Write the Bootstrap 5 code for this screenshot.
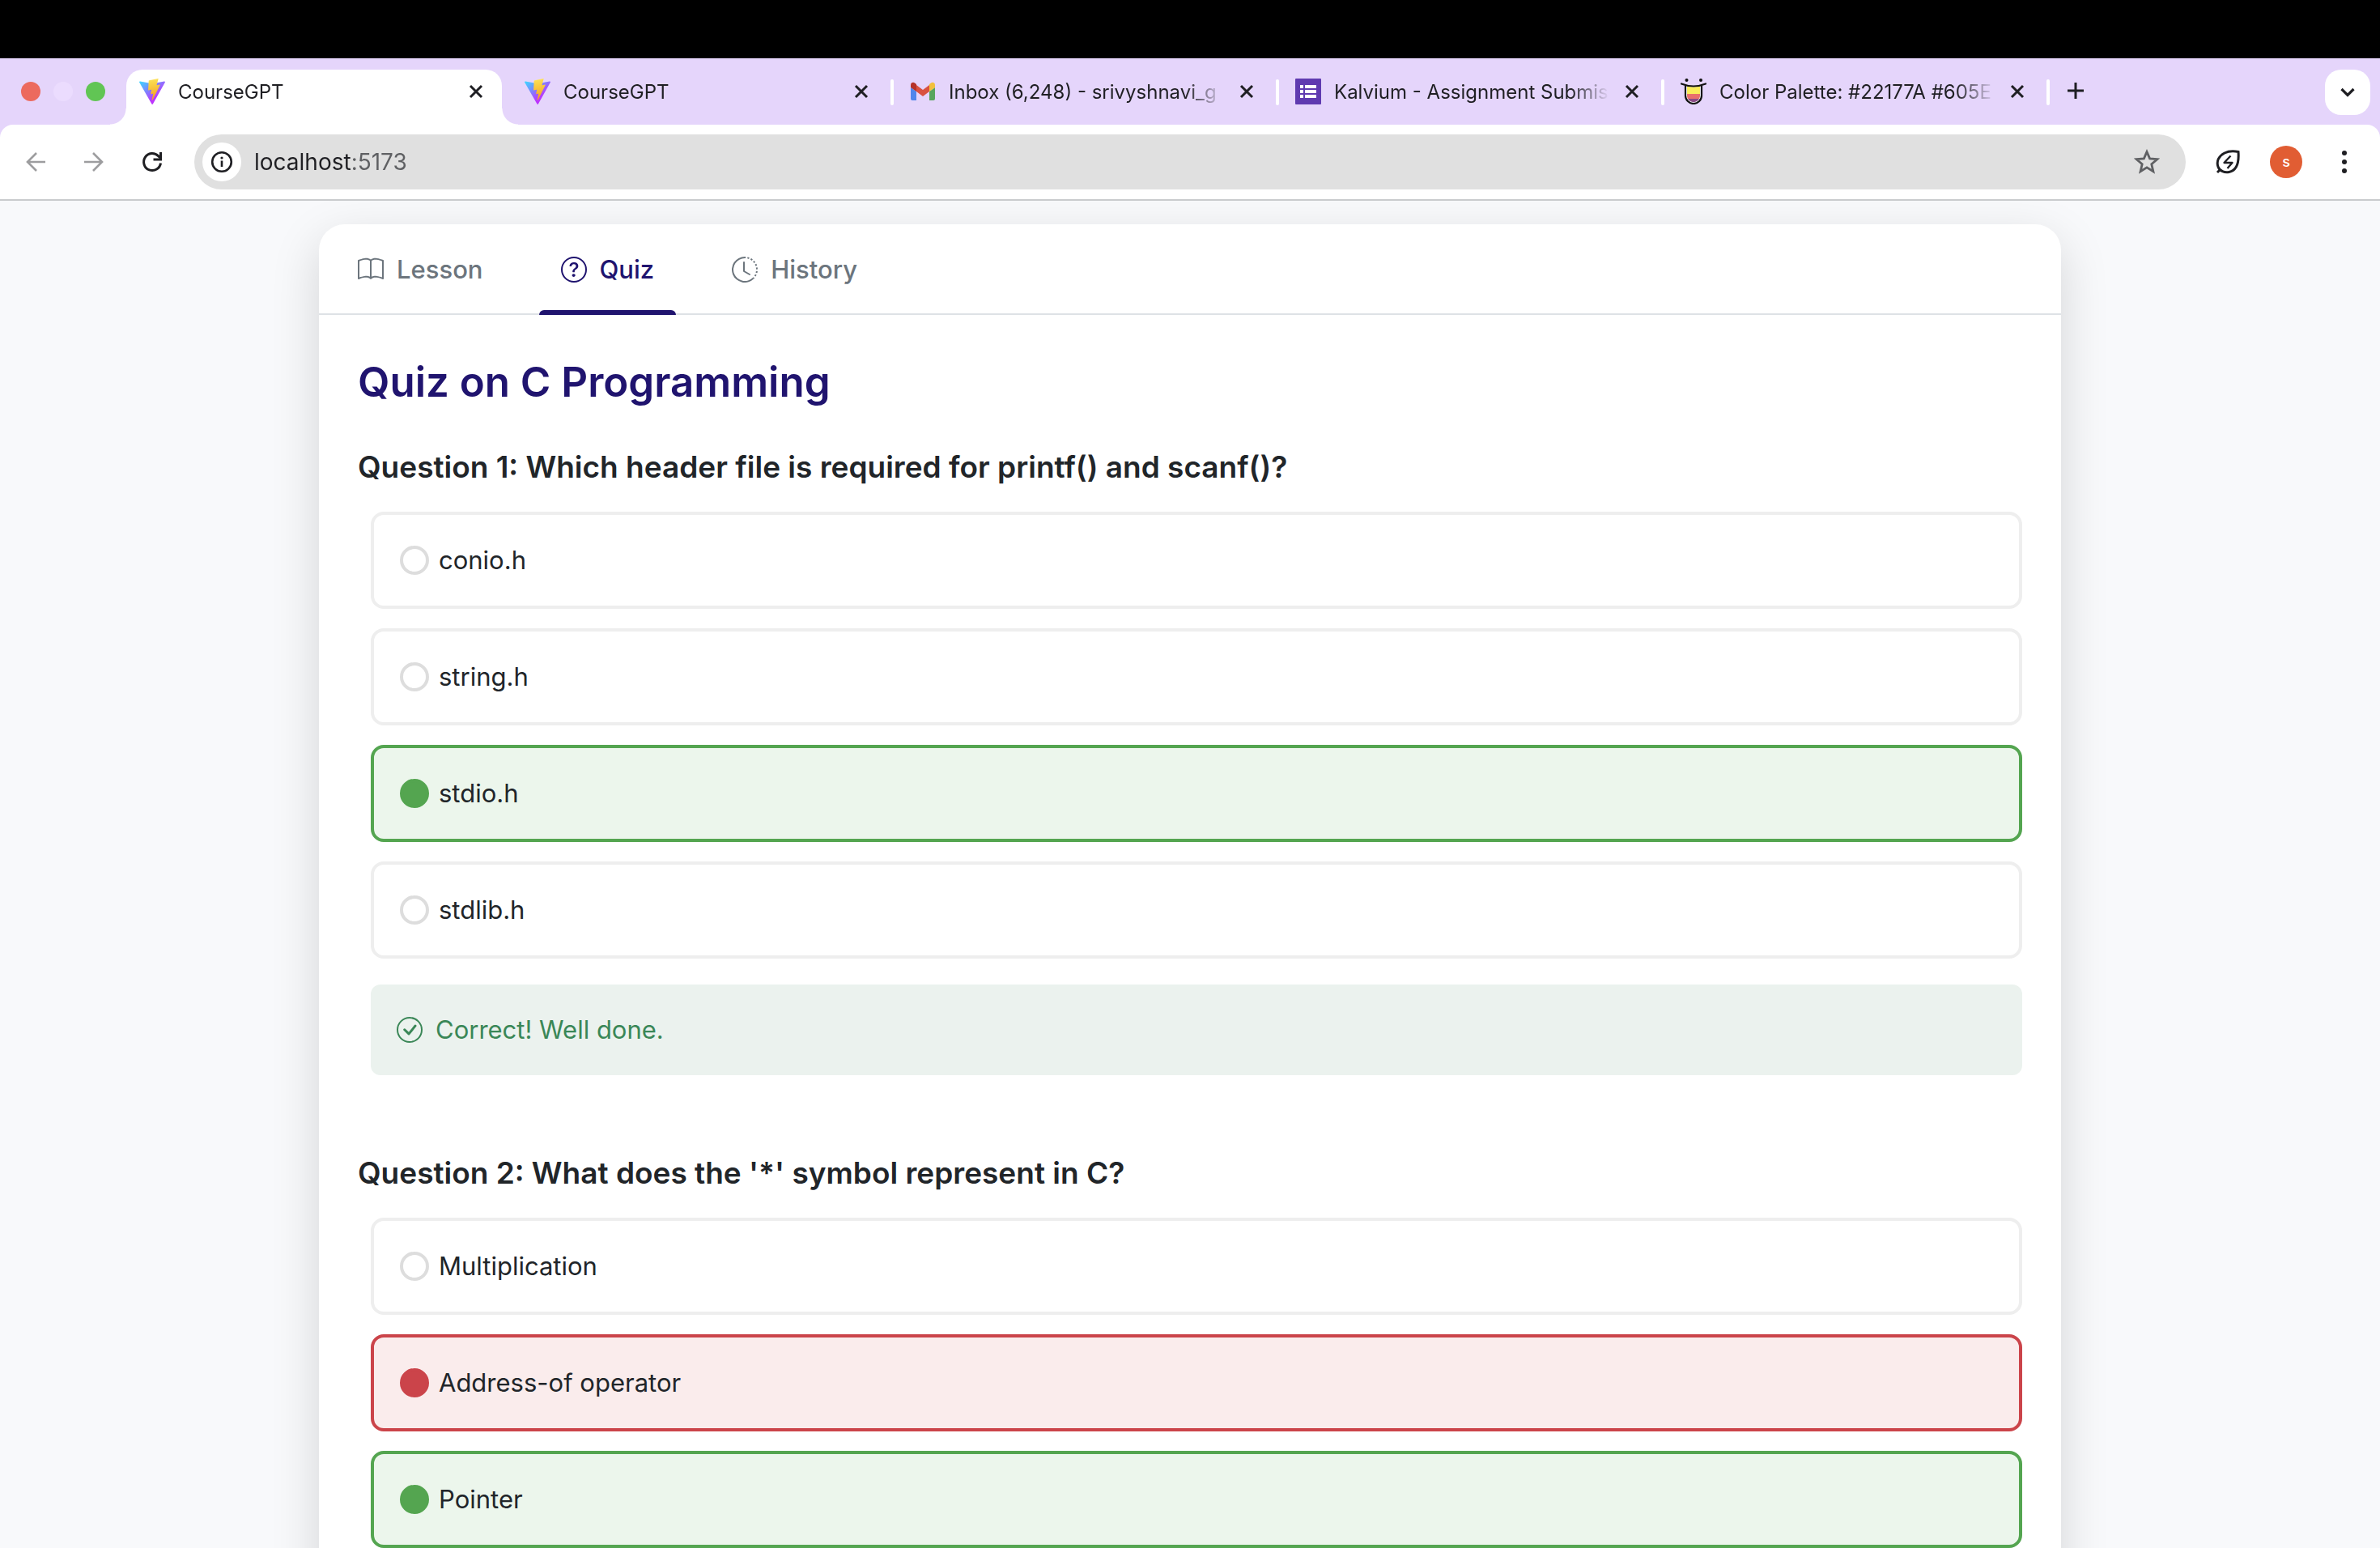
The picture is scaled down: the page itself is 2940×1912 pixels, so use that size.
<!DOCTYPE html>
<html lang="en">
<head>
<meta charset="utf-8">
<meta name="viewport" content="width=device-width, initial-scale=1">
<title>CourseGPT</title>
<link href="https://cdn.jsdelivr.net/npm/bootstrap@5.3.0/dist/css/bootstrap.min.css" rel="stylesheet">
<style>
:root{--strip:#e5d5fb;--ink:#1f1f23;--brand:#20146f;--ok:#54a550;--bad:#cb444a}
body{font-family:Inter,"Liberation Sans",sans-serif;background:#f8f9fb;color:#212529}
svg{display:block;flex:none}
button{color:inherit}
.bare{background:none;border:0;padding:0}

/* browser frame */
.notch{height:72px;background:#000}
.strip{background:var(--strip);height:82px;padding:14px 12px 0 26px;color:var(--ink)}
.lights{gap:16px;width:130px;height:54px}
.light{width:24px;height:24px;border-radius:50%}
.light-close{background:#ec6a5e}
.light-min{background:#ebdcfe}
.light-max{background:#61c554}
.tabs{gap:12px;min-width:0;flex:0 1 2368px}
.browser-tab{position:relative;flex:1 1 0;min-width:0;height:68px;padding:0 16px 14px;font-size:24px;line-height:32px}
.browser-tab.current{background:#fff;border-radius:20px 20px 0 0}
.browser-tab.current::before,.browser-tab.current::after{content:"";position:absolute;bottom:0;width:20px;height:20px}
.browser-tab.current::before{right:100%;background:radial-gradient(circle at 0 0,transparent 19px,#fff 20px)}
.browser-tab.current::after{left:100%;background:radial-gradient(circle at 100% 0,transparent 19px,#fff 20px)}
.tab-name{flex:1 1 0;min-width:0;margin:0 8px 0 16px;padding-top:2px;overflow:hidden;white-space:nowrap;-webkit-mask-image:linear-gradient(90deg,#000 calc(100% - 52px),transparent calc(100% - 4px));mask-image:linear-gradient(90deg,#000 calc(100% - 52px),transparent calc(100% - 4px))}
.divided::after{content:"";position:absolute;right:-8px;top:12px;width:4px;height:32px;border-radius:2px;background:#fff}
.new-tab{margin:10px 0 0 24px}
.tab-search{width:56px;height:56px;border-radius:20px;background:#fff}
.toolbar-wrap{background:var(--strip)}
.toolbar{height:94px;background:#fff;border-bottom:2px solid #c9cbcd;border-radius:16px 16px 0 0;padding:0 28px 0 28px;color:var(--ink)}
.nav-icons{gap:40px;margin-right:24px;width:188px}
.omnibox{flex:1;height:68px;border-radius:34px;background:#e0e0e0;padding:0 32px 0 10px}
.site-info{width:48px;height:48px;border-radius:50%;background:#fff}
.address{flex:1;min-width:0;border:0;outline:0;padding:0 0 0 16px;font-size:28px;line-height:40px;color:transparent;background:linear-gradient(90deg,#1f1f23 136px,#5f6063 136px);-webkit-background-clip:text;background-clip:text}
.tool-icons{gap:36px;margin-left:36px}
.avatar{width:40px;height:40px;border-radius:50%;background:#e15d33;color:#fff;font-size:18px;line-height:40px;font-weight:500}

/* course page */
.page{padding:29px 24px 0;min-height:0}
.course-card{max-width:2152px;margin:0 auto;background:#fff;border-radius:32px;box-shadow:0 20px 60px rgba(0,0,0,.15)}
.course-nav{gap:42px;padding-left:21px;border-bottom:2px solid #dee2e6}
.course-nav .nav-link{position:relative;display:flex;align-items:center;gap:16px;padding:32px 27px 30px;font-size:31px;line-height:48px;font-weight:500;color:#6c757d}
.course-nav .nav-link.active{color:var(--brand)}
.course-nav .nav-link.active::after{content:"";position:absolute;left:0;right:0;bottom:-2px;height:6px;border-radius:6px 6px 0 0;background:var(--brand)}
.quiz{padding:49px 48px 80px}
.quiz-title{font-size:51px;line-height:68px;font-weight:600;color:var(--brand);margin:0 0 47px}
.question{border:0;margin:0 0 97px;padding:0;min-width:0}
.question legend{float:none;font-size:37px;line-height:48px;font-weight:600;margin:0 0 31px;padding:0}
.answers{gap:24px;padding-left:16px}
.answer{gap:12px;padding:32px;border:4px solid #eee;border-radius:16px;font-size:31px;line-height:48px}
.answer .form-check-input{width:36px;height:36px;margin:0;border:4px solid #ddd;background-image:none;background-color:#fff;box-shadow:none}
.answer.right{border-color:var(--ok);background:#ecf6ec}
.answer.right .form-check-input{border-color:var(--ok);background-color:var(--ok)}
.answer.wrong{border-color:var(--bad);background:#faecec}
.answer.wrong .form-check-input{border-color:var(--bad);background-color:var(--bad)}
.feedback{gap:16px;margin:32px 0 0 16px;padding:32px;border:0;border-radius:12px;background:#ebf2ee;color:#3a8757;font-size:31px;line-height:48px}
</style>
</head>
<body class="vh-100 overflow-hidden d-flex flex-column">
<svg width="0" height="0" class="position-absolute" aria-hidden="true">
  <defs>
    <linearGradient id="vite-body" x1="-1%" y1="8%" x2="58%" y2="78%"><stop offset="0" stop-color="#41d1ff"/><stop offset="1" stop-color="#bd34fe"/></linearGradient>
    <linearGradient id="vite-bolt" x1="43%" y1="2%" x2="50%" y2="89%"><stop offset="0" stop-color="#ffea83"/><stop offset=".08" stop-color="#fbdc50"/><stop offset="1" stop-color="#f5a623"/></linearGradient>
    <symbol id="vite" viewBox="0 0 256 257">
      <path fill="url(#vite-body)" d="M255.153 37.938L134.897 252.976c-2.483 4.44-8.862 4.466-11.382.048L.875 37.958c-2.746-4.814 1.371-10.646 6.827-9.67l120.385 21.517a6.537 6.537 0 0 0 2.322-.004l117.867-21.483c5.438-.991 9.574 4.796 6.877 9.62Z"/>
      <path fill="url(#vite-bolt)" d="M185.432.063L96.44 17.501a3.268 3.268 0 0 0-2.634 3.014l-5.474 92.456a3.268 3.268 0 0 0 3.997 3.378l24.777-5.718c2.318-.535 4.413 1.507 3.936 3.838l-7.361 36.047c-.495 2.426 1.782 4.5 4.151 3.78l15.304-4.649c2.372-.72 4.652 1.36 4.15 3.788l-11.698 56.621c-.732 3.542 3.979 5.473 5.943 2.437l1.313-2.028l72.516-144.72c1.215-2.423-.88-5.186-3.54-4.672l-25.505 4.922c-2.396.462-4.435-1.77-3.759-4.114l16.646-57.705c.677-2.35-1.37-4.583-3.769-4.113Z"/>
    </symbol>
    <symbol id="cross" viewBox="0 0 32 32"><path d="M9 9l14 14M23 9L9 23" fill="none" stroke="currentColor" stroke-width="3"/></symbol>
  </defs>
</svg>

<header class="flex-shrink-0">
  <div class="notch"></div>
  <div class="strip d-flex align-items-start">
    <div class="lights d-flex align-items-center flex-shrink-0">
      <span class="light light-close"></span><span class="light light-min"></span><span class="light light-max"></span>
    </div>
    <div class="tabs d-flex">
      <div class="browser-tab current d-flex align-items-center">
        <svg width="32" height="32"><use href="#vite"/></svg>
        <span class="tab-name">CourseGPT</span>
        <button class="bare" type="button" aria-label="Close tab"><svg width="32" height="32"><use href="#cross"/></svg></button>
      </div>
      <div class="browser-tab divided d-flex align-items-center">
        <svg width="32" height="32"><use href="#vite"/></svg>
        <span class="tab-name">CourseGPT</span>
        <button class="bare" type="button" aria-label="Close tab"><svg width="32" height="32"><use href="#cross"/></svg></button>
      </div>
      <div class="browser-tab divided d-flex align-items-center">
        <svg width="32" height="32" viewBox="0 0 32 32">
          <path fill="#4f86ec" d="M1 11l7 5v11H3a2 2 0 0 1-2-2z"/>
          <path fill="#58a55c" d="M31 11l-7 5v11h5a2 2 0 0 0 2-2z"/>
          <path fill="#d95140" d="M8 8l8 6 8-6v8l-8 6-8-6z"/>
          <path fill="#b5332a" d="M1 11V8c0-3 3-4 5-2.600L8 7v9z"/>
          <path fill="#f2c03d" d="M31 11V8c0-3-3-4-5-2.600L24 7v9z"/>
        </svg>
        <span class="tab-name">Inbox (6,248) - srivyshnavi_g</span>
        <button class="bare" type="button" aria-label="Close tab"><svg width="32" height="32"><use href="#cross"/></svg></button>
      </div>
      <div class="browser-tab divided d-flex align-items-center">
        <svg width="32" height="32" viewBox="0 0 32 32">
          <rect width="32" height="32" rx="1" fill="#5f3ab0"/>
          <path fill="#fff" d="M6 8h4v4H6zM12 8h14v4H12zM6 14h4v4H6zM12 14h14v4H12zM6 20h4v4H6zM12 20h14v4H12z"/>
        </svg>
        <span class="tab-name">Kalvium - Assignment Submis</span>
        <button class="bare" type="button" aria-label="Close tab"><svg width="32" height="32"><use href="#cross"/></svg></button>
      </div>
      <div class="browser-tab divided d-flex align-items-center">
        <svg width="32" height="32" viewBox="0 0 32 32">
          <path fill="#fff" d="M6 9h20v12a10 10 0 0 1-20 0z"/>
          <path fill="#faed5a" d="M8 9.500q8 2 16 0V19H8z"/>
          <path fill="#e8706c" d="M8 19h16v3a8 8 0 0 1-1 3H9a8 8 0 0 1-1-3z"/>
          <path fill="#8a4a86" d="M9 25h14a8 8 0 0 1-14 0z"/>
          <path d="M1 6.500q15 6 30 0M6 9v12a10 10 0 0 0 20 0V9" fill="none" stroke="#111" stroke-width="2.200" stroke-linecap="round"/>
          <circle cx="7.500" cy="2" r="2" fill="#111"/><circle cx="25" cy="2" r="2" fill="#111"/>
        </svg>
        <span class="tab-name">Color Palette: #22177A #605E</span>
        <button class="bare" type="button" aria-label="Close tab"><svg width="32" height="32"><use href="#cross"/></svg></button>
      </div>
    </div>
    <button class="bare new-tab" type="button" aria-label="New tab"><svg width="32" height="32" viewBox="0 0 32 32"><path d="M16 6v20M6 16h20" stroke="currentColor" stroke-width="3"/></svg></button>
    <button class="bare tab-search d-flex align-items-center justify-content-center ms-auto flex-shrink-0" type="button" aria-label="Search tabs"><svg width="32" height="32" viewBox="0 0 32 32"><path d="M8.500 12l7.500 7.500 7.500-7.500" fill="none" stroke="currentColor" stroke-width="3.200"/></svg></button>
  </div>
  <div class="toolbar-wrap">
    <div class="toolbar d-flex align-items-center">
      <div class="nav-icons d-flex flex-shrink-0">
        <button class="bare" type="button" aria-label="Back"><svg width="32" height="32" viewBox="0 0 32 32"><path d="M28 16H6M17 5L6 16l11 11" fill="none" stroke="#9d9d9f" stroke-width="2.600"/></svg></button>
        <button class="bare" type="button" aria-label="Forward"><svg width="32" height="32" viewBox="0 0 32 32"><path d="M4 16h22M15 5l11 11-11 11" fill="none" stroke="#9d9d9f" stroke-width="2.600"/></svg></button>
        <button class="bare" type="button" aria-label="Reload"><svg width="32" height="32" viewBox="0 0 32 32"><path d="M26.500 17.500A10.500 10.500 0 1 1 23.500 8.600L26 11" fill="none" stroke="currentColor" stroke-width="3"/><path d="M28 4v10.500H17.500v-3H25V4z" fill="currentColor"/></svg></button>
      </div>
      <div class="omnibox d-flex align-items-center">
        <button class="bare site-info d-flex align-items-center justify-content-center" type="button" aria-label="Site information"><svg width="28" height="28" viewBox="0 0 28 28"><circle cx="14" cy="14" r="11.800" fill="none" stroke="currentColor" stroke-width="2.600"/><path d="M14 12.500v7.500" stroke="currentColor" stroke-width="2.600"/><circle cx="14" cy="9" r="1.600" fill="currentColor"/></svg></button>
        <input class="address" type="text" value="localhost:5173" aria-label="Address">
        <button class="bare" type="button" aria-label="Bookmark this page"><svg width="32" height="32" viewBox="0 0 32 32"><path d="M16 3.500l3.600 8.400 9.200.8-7 6 2.100 9L16 22.900l-7.900 4.800 2.100-9-7-6 9.200-.8z" fill="none" stroke="#5f6063" stroke-width="2.800"/></svg></button>
      </div>
      <div class="tool-icons d-flex align-items-center flex-shrink-0">
        <button class="bare" type="button" aria-label="Energy saver"><svg width="32" height="32" viewBox="2 2 32 32"><path d="M31 5.500c-4-.8-12-1-17 1.500C7 10.500 3.500 17 6 24c2 5.500 8 7.500 13.500 6.500C29.500 28.500 32 19 31 5.500zM9 27l-4 4" fill="none" stroke="currentColor" stroke-width="3"/><path d="M21.500 10.500L13.500 19h10l-6 7" fill="none" stroke="currentColor" stroke-width="2.400" stroke-linejoin="round"/></svg></button>
        <button class="bare avatar text-center" type="button" aria-label="Profile">s</button>
        <button class="bare" type="button" aria-label="Menu"><svg width="32" height="32" viewBox="0 0 32 32" fill="currentColor"><circle cx="16" cy="5" r="3"/><circle cx="16" cy="16" r="3"/><circle cx="16" cy="27" r="3"/></svg></button>
      </div>
    </div>
  </div>
</header>

<main class="page flex-grow-1 overflow-hidden">
  <div class="course-card">
    <nav class="nav course-nav" aria-label="Course sections">
      <a class="nav-link" href="#lesson">
        <svg width="32" height="32" viewBox="0 0 16 16" fill="currentColor"><path d="M1 2.828c.885-.37 2.154-.769 3.388-.893 1.330-.134 2.458.063 3.112.752v9.746c-.935-.53-2.120-.603-3.213-.493-1.180.120-2.370.461-3.287.811zm7.500-.141c.654-.689 1.782-.886 3.112-.752 1.234.124 2.503.523 3.388.893v9.923c-.918-.35-2.107-.692-3.287-.81-1.094-.111-2.278-.039-3.213.492zM8 1.783C7.015.936 5.587.81 4.287.94c-1.514.153-3.042.672-3.994 1.105A.5.5 0 0 0 0 2.500v11a.5.5 0 0 0 .707.455c.882-.4 2.303-.881 3.680-1.020 1.409-.142 2.590.087 3.223.877a.5.5 0 0 0 .78 0c.633-.79 1.814-1.019 3.222-.877 1.378.139 2.800.62 3.681 1.020A.5.5 0 0 0 16 13.500v-11a.5.5 0 0 0-.293-.455c-.952-.433-2.480-.952-3.994-1.105C10.413.809 8.985.936 8 1.783"/></svg>
        Lesson
      </a>
      <a class="nav-link active" href="#quiz" aria-current="page">
        <svg width="32" height="32" viewBox="0 0 16 16" fill="currentColor"><path d="M8 15A7 7 0 1 1 8 1a7 7 0 0 1 0 14m0 1A8 8 0 1 0 8 0a8 8 0 0 0 0 16"/><path d="M5.255 5.786a.237.237 0 0 0 .241.247h.825c.138 0 .248-.113.266-.25.09-.656.54-1.134 1.342-1.134.686 0 1.314.343 1.314 1.168 0 .635-.374.927-.965 1.371-.673.489-1.206 1.060-1.168 1.987l.003.217a.25.25 0 0 0 .25.246h.811a.25.25 0 0 0 .25-.25v-.105c0-.718.273-.927 1.010-1.486.609-.463 1.244-.977 1.244-2.056 0-1.511-1.276-2.241-2.673-2.241-1.267 0-2.655.59-2.750 2.286m1.557 5.763c0 .533.425.927 1.010.927.609 0 1.028-.394 1.028-.927 0-.552-.42-.94-1.029-.94-.584 0-1.009.388-1.009.94"/></svg>
        Quiz
      </a>
      <a class="nav-link" href="#history">
        <svg width="32" height="32" viewBox="0 0 16 16" fill="currentColor"><path d="M8.515 1.019A7 7 0 0 0 8 1V0a8 8 0 0 1 .589.022zm2.004.45a7 7 0 0 0-.985-.299l.219-.976q.576.129 1.126.342zm1.370.71a7 7 0 0 0-.439-.27l.493-.87a8 8 0 0 1 .979.654l-.615.789a7 7 0 0 0-.418-.302zm1.834 1.790a7 7 0 0 0-.653-.796l.724-.69q.406.429.747.91zm.744 1.352a7 7 0 0 0-.214-.468l.893-.45a8 8 0 0 1 .45 1.088l-.95.313a7 7 0 0 0-.179-.483m.53 2.507a7 7 0 0 0-.1-1.025l.985-.17q.1.58.116 1.170zm-.131 1.538q.05-.254.081-.51l.993.123a8 8 0 0 1-.23 1.155l-.964-.267q.069-.247.12-.501m-.952 2.379q.276-.436.486-.908l.914.405q-.24.54-.555 1.038zm-.964 1.205q.183-.183.35-.378l.758.653a8 8 0 0 1-.401.432z"/><path d="M8 1a7 7 0 1 0 4.950 11.950l.707.707A8.001 8.001 0 1 1 8 0z"/><path d="M7.500 3a.5.5 0 0 1 .5.5v5.210l3.248 1.856a.5.5 0 0 1-.496.868l-3.500-2A.5.5 0 0 1 7 9V3.500a.5.5 0 0 1 .5-.5"/></svg>
        History
      </a>
    </nav>

    <div class="quiz">
      <h1 class="quiz-title">Quiz on C Programming</h1>

      <fieldset class="question">
        <legend>Question 1: Which header file is required for printf() and scanf()?</legend>
        <div class="answers d-flex flex-column">
          <label class="answer d-flex align-items-center"><input class="form-check-input" type="radio" name="q1">conio.h</label>
          <label class="answer d-flex align-items-center"><input class="form-check-input" type="radio" name="q1">string.h</label>
          <label class="answer right d-flex align-items-center"><input class="form-check-input" type="radio" name="q1" checked>stdio.h</label>
          <label class="answer d-flex align-items-center"><input class="form-check-input" type="radio" name="q1">stdlib.h</label>
        </div>
        <div class="feedback d-flex align-items-center" role="status">
          <svg width="32" height="32" viewBox="0 0 16 16" fill="currentColor"><path d="M8 15A7 7 0 1 1 8 1a7 7 0 0 1 0 14m0 1A8 8 0 1 0 8 0a8 8 0 0 0 0 16"/><path d="M10.970 4.970a.235.235 0 0 0-.020.022L7.477 9.417 5.384 7.323a.75.75 0 0 0-1.060 1.060L6.970 11.030a.75.75 0 0 0 1.079-.020l3.992-4.990a.75.75 0 0 0-1.071-1.050z"/></svg>
          Correct! Well done.
        </div>
      </fieldset>

      <fieldset class="question">
        <legend>Question 2: What does the '*' symbol represent in C?</legend>
        <div class="answers d-flex flex-column">
          <label class="answer d-flex align-items-center"><input class="form-check-input" type="radio" name="q2">Multiplication</label>
          <label class="answer wrong d-flex align-items-center"><input class="form-check-input" type="radio" name="q2" checked>Address-of operator</label>
          <label class="answer right d-flex align-items-center"><input class="form-check-input" type="radio" name="q2">Pointer</label>
        </div>
      </fieldset>
    </div>
  </div>
</main>
<script src="https://cdn.jsdelivr.net/npm/bootstrap@5.3.0/dist/js/bootstrap.bundle.min.js"></script>
</body>
</html>
